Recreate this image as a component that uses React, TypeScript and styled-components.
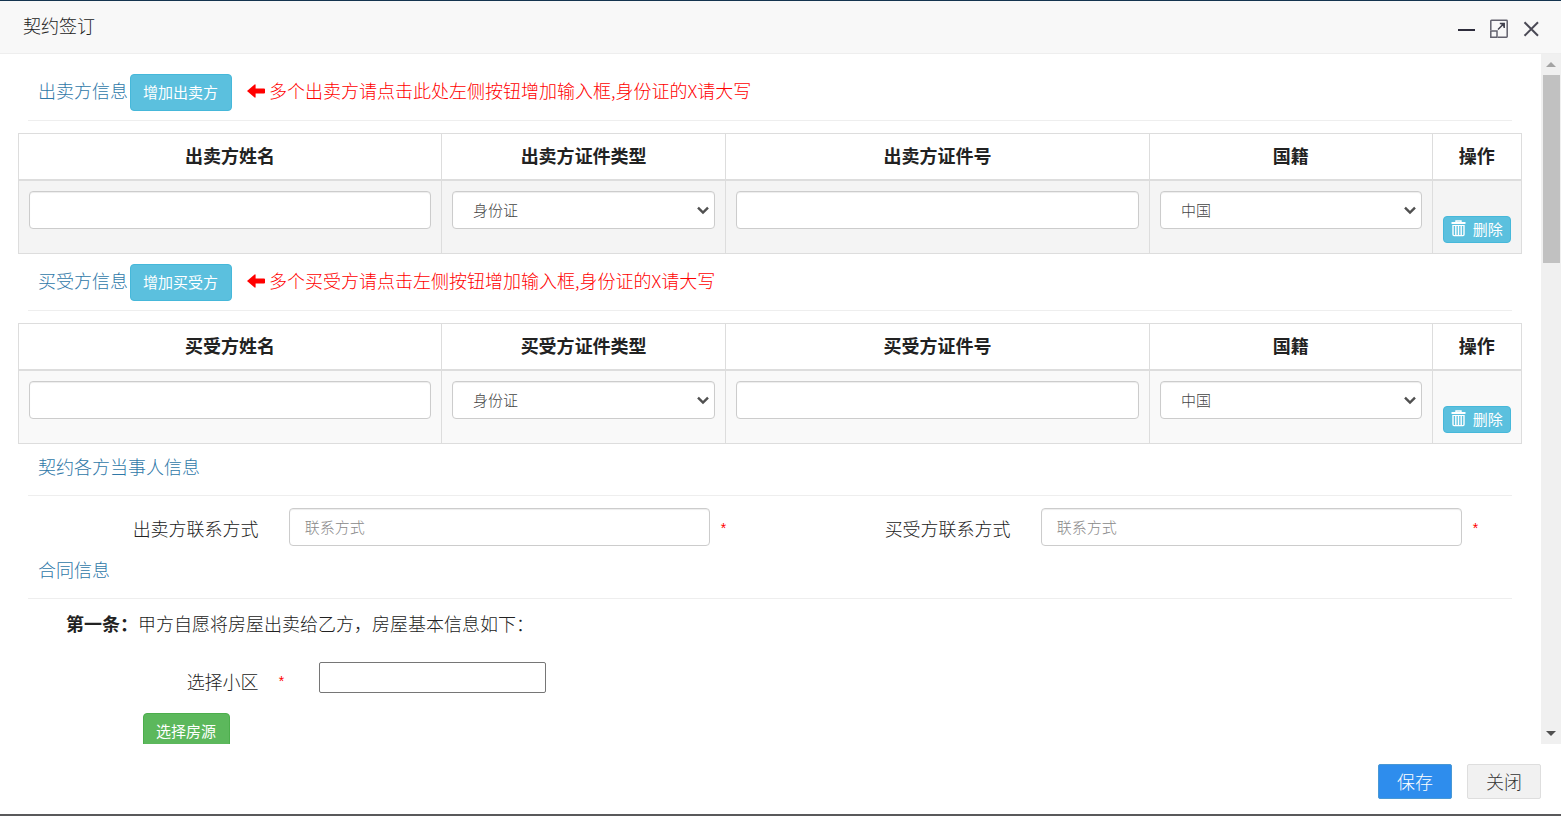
import React, { useId } from 'react';
import styled, { createGlobalStyle } from 'styled-components';

const GlobalStyle = createGlobalStyle`
  *, *::before, *::after { box-sizing: border-box; }
  body {
    margin: 0;
    color: #222;
    background: #fff;
    font: 300 18px/25px "Noto Sans CJK SC", "Open Sans", sans-serif;
  }
  button, input, select { font: inherit; }
`;

const Dialog = styled.div`
  display: flex;
  flex-direction: column;
  height: 100vh;
  border-top: 1px solid #14344f;
  border-bottom: 2px solid #59595b;
`;

const TitleBar = styled.header`
  display: flex;
  align-items: center;
  justify-content: space-between;
  flex: none;
  height: 53px;
  padding: 0 20px 0 23px;
  background: #f8f8f8;
  border-bottom: 1px solid #eee;
`;

const Title = styled.h1`
  margin: 0;
  padding-bottom: 3px;
  font-size: 18px;
  font-weight: 300;
`;

const WindowTools = styled.div`
  display: flex;
  gap: 12px;
  padding-top: 3px;
`;

const ToolButton = styled.button`
  display: flex;
  padding: 0;
  border: 0;
  background: none;
  color: #2e2d3c;
`;

const Body = styled.div`
  display: flex;
  flex: 1;
  min-height: 0;
`;

const Content = styled.main`
  flex: 1;
  min-width: 0;
  overflow: hidden;
  padding: 10px 19px 0 18px;
`;

const Scrollbar = styled.div`
  display: flex;
  flex-direction: column;
  justify-content: space-between;
  flex: none;
  width: 20px;
  background: #f0f0f0;
`;

const ScrollTop = styled.div`
  display: flex;
  flex-direction: column;
  height: 209px;
`;

const ScrollButton = styled.button`
  display: flex;
  align-items: center;
  justify-content: center;
  flex: none;
  height: 21px;
  padding: 0;
  border: 0;
  background: none;
`;

const Thumb = styled.div`
  flex: 1;
  margin: 0 1px 0 2px;
  background: #c1c1c1;
`;

const SectionHead = styled.div<{ $plain?: boolean }>`
  display: flex;
  align-items: center;
  margin: 0 10px 12px;
  padding: ${p => (p.$plain ? '10px 10px 16px' : '10px 10px 9px')};
  border-bottom: 1px solid #eee;
`;

const SectionTitle = styled.h2<{ $raised?: boolean }>`
  margin: 0;
  padding-bottom: ${p => (p.$raised ? '4px' : '0')};
  color: #2f78a8;
  font-size: 18px;
  font-weight: 300;
`;

const Hint = styled.span`
  display: flex;
  align-items: center;
  gap: 4px;
  margin-left: 15px;
  padding-bottom: 4px;
  color: #f00;
`;

const Button = styled.button<{ $tone: 'info' | 'success' }>`
  height: 37px;
  padding: 0 13px 3px 12px;
  border: 1px solid ${p => (p.$tone === 'info' ? '#46b8da' : '#4cae4c')};
  border-radius: 4px;
  background: ${p => (p.$tone === 'info' ? '#5bc0de' : '#5cb85c')};
  color: #fff;
  font-size: 15px;
  font-weight: 400;
  line-height: 21px;
`;

const AddButton = styled(Button)`
  margin-left: 2px;
`;

const SmallButton = styled(Button)`
  display: flex;
  align-items: center;
  justify-content: center;
  gap: 7px;
  width: 100%;
  height: 27px;
  padding: 0 0 2px;
`;

const Table = styled.table<{ $shade: string }>`
  width: 100%;
  table-layout: fixed;
  border-collapse: collapse;

  th, td {
    border: 1px solid #ddd;
    padding: 10px;
  }
  th {
    height: 46px;
    padding: 9px 10px 10px;
    border-bottom-width: 2px;
    font-weight: 700;
  }
  td {
    height: 74px;
    vertical-align: top;
    background: ${p => p.$shade};
  }
  td:last-child {
    vertical-align: bottom;
  }
`;

const Column = styled.col<{ $share: number }>`
  width: ${p => p.$share}%;
`;

const TextInput = styled.input`
  display: block;
  width: 100%;
  height: 38px;
  padding: 0 15px 2px;
  border: 1px solid #ccc;
  border-radius: 4px;
  background: #fff;
  color: #444;
  font-size: 15px;
  box-shadow: inset 0 1px 1px rgba(0, 0, 0, 0.075);

  &::placeholder { color: #888; opacity: 1; }
`;

const SelectBox = styled.div`
  position: relative;

  svg {
    position: absolute;
    right: 6px;
    top: 15px;
    pointer-events: none;
  }
`;

const Select = styled(TextInput).attrs({ as: 'select' })`
  appearance: none;
  padding: 0 20px 1px;
`;

const ContactRow = styled.div`
  display: grid;
  grid-template-columns: 1fr 1fr;
  align-items: start;
  min-height: 39px;
`;

const ContactField = styled.div`
  display: grid;
  grid-template-columns: 32% 56% 1fr;
  align-items: center;
`;

const Label = styled.label`
  text-align: right;
`;

const ContactLabel = styled(Label)`
  padding-top: 3px;
`;

const ContactInput = styled(TextInput)`
  margin-left: 30px;
`;

const Star = styled.span`
  color: #f00;
  font-family: "Liberation Sans", sans-serif;
  font-size: 14px;
  font-weight: 400;
`;

const ContactStar = styled(Star)`
  padding: 2px 0 0 41px;
`;

const Clause = styled.p`
  margin: 0;
  padding-left: 48px;

  strong { font-weight: 700; }
`;

const EstateRow = styled.div`
  display: flex;
  align-items: center;
  margin: 25px 0 19px;
`;

const EstateLabel = styled(Label)`
  width: 16%;
  padding-top: 8px;
`;

const EstateStar = styled(Star)`
  width: 60px;
  padding: 8px 0 0 20px;
`;

const PlainInput = styled.input`
  width: 227px;
  height: 31px;
  border: 1px solid #767676;
  border-radius: 2px;
`;

const PickRow = styled.div`
  padding-left: 125px;
`;

const Footer = styled.footer`
  display: flex;
  justify-content: flex-end;
  gap: 15px;
  flex: none;
  height: 70px;
  padding: 20px 20px 0;
`;

const FooterButton = styled.button<{ $primary?: boolean }>`
  height: 35px;
  padding: 0 18px;
  border: 1px solid ${p => (p.$primary ? '#4898d5' : '#dedede')};
  border-radius: 2px;
  background: ${p => (p.$primary ? '#2e8ded' : '#f1f1f1')};
  color: ${p => (p.$primary ? '#fff' : '#333')};
`;

const ArrowLeft = () => (
  <svg width="18" height="14" viewBox="0 0 18 14" fill="currentColor" aria-hidden="true">
    <path d="M0 7 7.6 0.4Q8.6 0 8.6 1V4.4H17Q18 4.4 18 5.2V8.8Q18 9.6 17 9.6H8.6V13Q8.6 14 7.6 13.6Z" />
  </svg>
);

const Trash = () => (
  <svg width="15" height="17" viewBox="0 0 15 17" fill="none" stroke="#fff" aria-hidden="true">
    <path d="M0.5 3H14.5" strokeWidth="2" />
    <path d="M5 2.5V1H10V2.5" strokeWidth="1.4" />
    <path d="M2 5V14.6Q2 15.6 3 15.6H12Q13 15.6 13 14.6V5M4.8 5V15M7.5 5V15M10.2 5V15" strokeWidth="1.4" />
    <path d="M2 5.5H13" />
  </svg>
);

const Chevron = () => (
  <svg width="12" height="9" viewBox="0 0 12 9" fill="none" stroke="#505050" strokeWidth="2.4" aria-hidden="true">
    <path d="M1 1.6 6 6.6 11 1.6" />
  </svg>
);

const Dropdown = ({ label, value }: { label: string; value: string }) => (
  <SelectBox>
    <Select aria-label={label}>
      <option>{value}</option>
    </Select>
    <Chevron />
  </SelectBox>
);

const PartySection = ({ party, hint, shade }: { party: string; hint: string; shade: string }) => (
  <section>
    <SectionHead>
      <SectionTitle $raised>{party}信息</SectionTitle>
      <AddButton type="button" $tone="info">增加{party}</AddButton>
      <Hint><ArrowLeft />{hint}</Hint>
    </SectionHead>
    <Table $shade={shade}>
      <colgroup>
        {[28.15, 18.9, 28.2, 18.8, 5.95].map((share, i) => <Column key={i} $share={share} />)}
      </colgroup>
      <thead>
        <tr>
          <th>{party}姓名</th>
          <th>{party}证件类型</th>
          <th>{party}证件号</th>
          <th>国籍</th>
          <th>操作</th>
        </tr>
      </thead>
      <tbody>
        <tr>
          <td><TextInput aria-label={`${party}姓名`} /></td>
          <td><Dropdown label={`${party}证件类型`} value="身份证" /></td>
          <td><TextInput aria-label={`${party}证件号`} /></td>
          <td><Dropdown label="国籍" value="中国" /></td>
          <td><SmallButton type="button" $tone="info"><Trash />删除</SmallButton></td>
        </tr>
      </tbody>
    </Table>
  </section>
);

const Contact = ({ label }: { label: string }) => {
  const id = useId();
  return (
    <ContactField>
      <ContactLabel htmlFor={id}>{label}</ContactLabel>
      <ContactInput id={id} placeholder="联系方式" />
      <ContactStar>*</ContactStar>
    </ContactField>
  );
};

export default function App() {
  return (
    <>
      <GlobalStyle />
      <Dialog role="dialog" aria-labelledby="dialog-title">
        <TitleBar>
          <Title id="dialog-title">契约签订</Title>
          <WindowTools>
            <ToolButton type="button" aria-label="最小化">
              <svg width="20" height="20" viewBox="0 0 20 20"><path d="M1 10H18V12H1Z" fill="currentColor" /></svg>
            </ToolButton>
            <ToolButton type="button" aria-label="最大化">
              <svg width="20" height="20" viewBox="0 0 20 20" fill="none" stroke="#62616d" strokeWidth="1.5">
                <path d="M1.8 11V2Q1.8 1.3 2.5 1.3H17.5Q18.2 1.3 18.2 2V17.5Q18.2 18.2 17.5 18.2H9" />
                <path d="M1.8 12H8V18.2H1.8Z" />
                <path d="M9 10.5 14.5 5M10.8 4.4H15.2V9" stroke="#41404d" />
                <path d="M11.5 4.4H15.2V8.2Z" fill="#41404d" stroke="none" />
              </svg>
            </ToolButton>
            <ToolButton type="button" aria-label="关闭窗口">
              <svg width="20" height="20" viewBox="0 0 20 20" fill="none" stroke="#4b4a56" strokeWidth="2">
                <path d="M3.5 3.3 17 16.8M17 3.3 3.5 16.8" />
              </svg>
            </ToolButton>
          </WindowTools>
        </TitleBar>
        <Body>
          <Content>
            <PartySection party="出卖方" shade="#f4f4f4" hint="多个出卖方请点击此处左侧按钮增加输入框,身份证的X请大写" />
            <PartySection party="买受方" shade="#f9f9f9" hint="多个买受方请点击左侧按钮增加输入框,身份证的X请大写" />
            <section>
              <SectionHead $plain><SectionTitle>契约各方当事人信息</SectionTitle></SectionHead>
              <ContactRow>
                <Contact label="出卖方联系方式" />
                <Contact label="买受方联系方式" />
              </ContactRow>
            </section>
            <section>
              <SectionHead $plain><SectionTitle>合同信息</SectionTitle></SectionHead>
              <Clause><strong>第一条：</strong>甲方自愿将房屋出卖给乙方，房屋基本信息如下：</Clause>
              <EstateRow>
                <EstateLabel htmlFor="estate">选择小区</EstateLabel>
                <EstateStar>*</EstateStar>
                <PlainInput id="estate" />
              </EstateRow>
              <PickRow><Button type="button" $tone="success">选择房源</Button></PickRow>
            </section>
          </Content>
          <Scrollbar>
            <ScrollTop>
              <ScrollButton type="button" aria-label="向上滚动">
                <svg width="10" height="5" viewBox="0 0 10 5"><path d="M0 5 5 0 10 5Z" fill="#a3a3a3" /></svg>
              </ScrollButton>
              <Thumb />
            </ScrollTop>
            <ScrollButton type="button" aria-label="向下滚动">
              <svg width="10" height="5" viewBox="0 0 10 5"><path d="M0 0H10L5 5Z" fill="#505050" /></svg>
            </ScrollButton>
          </Scrollbar>
        </Body>
        <Footer>
          <FooterButton type="button" $primary>保存</FooterButton>
          <FooterButton type="button">关闭</FooterButton>
        </Footer>
      </Dialog>
    </>
  );
}
